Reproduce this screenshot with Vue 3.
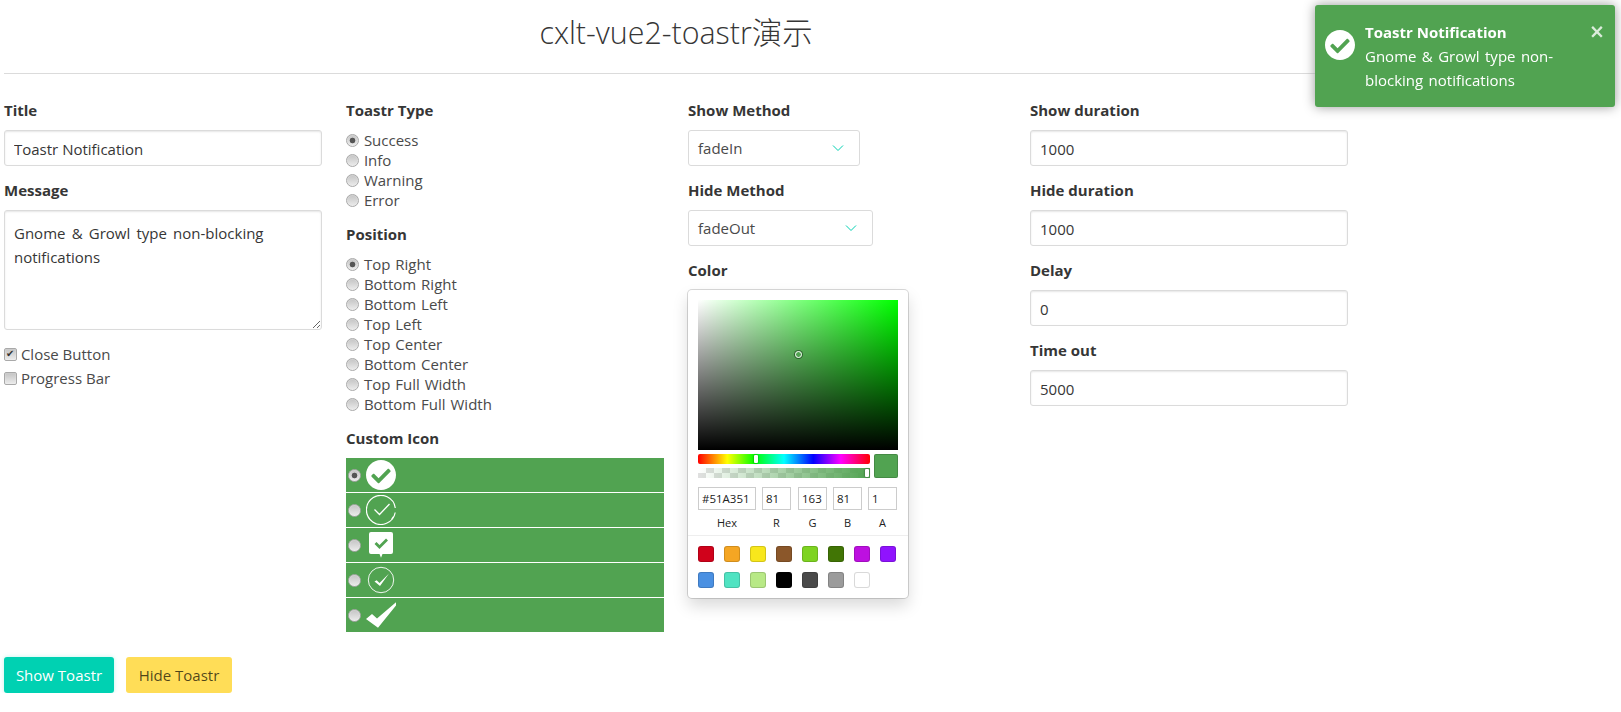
<script setup>
import { ref } from 'vue'

const title = ref('Toastr Notification')
const message = ref('Gnome & Growl type non-blocking notifications')
const closeButton = ref(true)
const progressBar = ref(false)
const toastType = ref('Success')
const position = ref('Top Right')
const customIcon = ref(0)
const showDuration = ref('1000')
const hideDuration = ref('1000')
const delay = ref('0')
const timeOut = ref('5000')

const types = ['Success', 'Info', 'Warning', 'Error']
const positions = [
  'Top Right',
  'Bottom Right',
  'Bottom Left',
  'Top Left',
  'Top Center',
  'Bottom Center',
  'Top Full Width',
  'Bottom Full Width',
]
const icons = [0, 1, 2, 3, 4]
const rgba = [
  { label: 'R', value: '81', cls: 'in-r' },
  { label: 'G', value: '163', cls: 'in-g' },
  { label: 'B', value: '81', cls: 'in-b' },
  { label: 'A', value: '1', cls: 'in-a' },
]
const presets = [
  '#D0021B', '#F5A623', '#F8E71C', '#8B572A', '#7ED321', '#417505', '#BD10E0', '#9013FE',
  '#4A90E2', '#50E3C2', '#B8E986', '#000000', '#4A4A4A', '#9B9B9B', '#FFFFFF',
]
const checkCircle = 'M504 256c0 136.967-111.033 248-248 248S8 392.967 8 256 119.033 8 256 8s248 111.033 248 248zM227.314 387.314l184-184c6.248-6.248 6.248-16.379 0-22.627l-22.627-22.627c-6.248-6.249-16.379-6.249-22.628 0L216 308.118l-70.059-70.059c-6.248-6.248-16.379-6.248-22.628 0l-22.627 22.627c-6.248 6.248-6.248 16.379 0 22.627l104 104c6.249 6.25 16.379 6.25 22.628.001z'
</script>

<template>
  <div class="page">
    <h1 class="heading">cxlt-vue2-toastr演示</h1>
    <hr class="rule">

    <div class="columns">
      <div class="col">
        <label class="label">Title</label>
        <input v-model="title" class="input" type="text">
        <label class="label">Message</label>
        <textarea v-model="message" class="input textarea" />
        <label class="check"><input v-model="closeButton" class="box" type="checkbox"> Close Button</label>
        <label class="check"><input v-model="progressBar" class="box" type="checkbox"> Progress Bar</label>
      </div>

      <div class="col">
        <label class="label">Toastr Type</label>
        <div class="radios">
          <label v-for="t in types" :key="t" class="radio">
            <input v-model="toastType" class="dot" type="radio" :value="t"> {{ t }}
          </label>
        </div>
        <label class="label">Position</label>
        <div class="radios">
          <label v-for="p in positions" :key="p" class="radio">
            <input v-model="position" class="dot" type="radio" :value="p"> {{ p }}
          </label>
        </div>
        <label class="label">Custom Icon</label>
        <div class="icon-list">
          <label v-for="i in icons" :key="i" class="icon-row">
            <input v-model="customIcon" class="dot" type="radio" :value="i">
            <svg v-if="i === 0" class="icon" viewBox="8 8 496 496">
              <path :d="checkCircle" fill="#fff" />
            </svg>
            <svg v-else-if="i === 1" class="icon" viewBox="0 0 30 30">
              <path d="M29.2 17.500A14.500 14.500 0 1 1 29.300 13" fill="none" stroke="#fff" stroke-width="1.200" />
              <path d="M27.500 21.500l-2 3" fill="none" stroke="#fff" stroke-width="1.200" />
              <path d="M8.500 14.500l5 5L23.500 9" fill="none" stroke="#fff" stroke-width="1.300" />
            </svg>
            <svg v-else-if="i === 2" class="icon" viewBox="0 0 30 30">
              <path d="M5 2h20a2 2 0 0 1 2 2v18a2 2 0 0 1-2 2h-8.500L15 27.700 13.500 24H5a2 2 0 0 1-2-2V4a2 2 0 0 1 2-2z" fill="#fff" />
              <path d="M9.500 13l4 4 7.500-7.500" fill="none" stroke="#51a351" stroke-width="2.800" />
            </svg>
            <svg v-else-if="i === 3" class="icon" viewBox="0 0 30 30">
              <circle cx="15" cy="15" r="12.700" fill="none" stroke="#fff" stroke-width="0.900" />
              <path d="M8.500 16.500l2.200-1.200 2.800 2.700L23 8.500 14 21z" fill="#fff" />
            </svg>
            <svg v-else class="icon" viewBox="0 0 30 30">
              <path d="M0 19l6-5 5 4.500L30 2.300v3.200L12 27.700z" fill="#fff" />
            </svg>
          </label>
        </div>
      </div>

      <div class="col">
        <label class="label">Show Method</label>
        <div class="select select-show">
          <span>fadeIn</span>
          <svg class="chevron" viewBox="0 0 12 8"><path d="M1 1.500l5 5 5-5" /></svg>
        </div>
        <label class="label">Hide Method</label>
        <div class="select select-hide">
          <span>fadeOut</span>
          <svg class="chevron" viewBox="0 0 12 8"><path d="M1 1.500l5 5 5-5" /></svg>
        </div>
        <label class="label">Color</label>
        <div class="picker">
          <div class="saturation">
            <div class="sat-dot" />
          </div>
          <div class="sliders">
            <div class="bars">
              <div class="hue"><div class="bar-handle hue-handle" /></div>
              <div class="alpha">
                <div class="alpha-fill" />
                <div class="bar-handle alpha-handle" />
              </div>
            </div>
            <div class="current" />
          </div>
          <div class="fields">
            <div class="field field-hex">
              <input class="mini" value="#51A351">
              <span>Hex</span>
            </div>
            <div v-for="f in rgba" :key="f.label" class="field" :class="f.cls">
              <input class="mini" :value="f.value">
              <span>{{ f.label }}</span>
            </div>
          </div>
          <div class="presets">
            <div v-for="c in presets" :key="c" class="preset" :style="{ background: c }" />
          </div>
        </div>
      </div>

      <div class="col">
        <label class="label">Show duration</label>
        <input v-model="showDuration" class="input" type="text">
        <label class="label">Hide duration</label>
        <input v-model="hideDuration" class="input" type="text">
        <label class="label">Delay</label>
        <input v-model="delay" class="input" type="text">
        <label class="label">Time out</label>
        <input v-model="timeOut" class="input" type="text">
      </div>
    </div>

    <div class="actions">
      <button class="btn btn-show">Show Toastr</button>
      <button class="btn btn-hide">Hide Toastr</button>
    </div>

    <!-- toast -->
    <div class="toast">
      <svg class="toast-icon" viewBox="8 8 496 496">
        <path :d="checkCircle" fill="#fff" />
      </svg>
      <div class="toast-body">
        <div class="toast-title">Toastr Notification</div>
        <div class="toast-msg">Gnome &amp; Growl type non-blocking notifications</div>
      </div>
      <span class="toast-close">×</span>
    </div>
  </div>
</template>

<style>
html, body {
  background: #fff;
}
</style>

<style scoped>
.page {
  width: 1344px;
  margin-left: 4px;
  color: #4a4a4a;
  font-family: "Open Sans", "Noto Sans CJK SC", sans-serif;
  font-size: 15px;
  line-height: 24px;
}

.heading {
  margin: 0;
  height: 73px;
  padding-top: 11px;
  box-sizing: border-box;
  text-align: center;
  font-size: 30.400px;
  line-height: 44px;
  font-weight: 300;
  color: #363636;
}

.rule {
  margin: 0 0 24px;
  border: 0;
  height: 1px;
  background: #dbdbdb;
}

.columns {
  display: grid;
  grid-template-columns: repeat(4, 318px);
  column-gap: 24px;
  height: 534px;
}

.label {
  display: block;
  font-weight: 700;
  color: #363636;
  margin-bottom: 8px;
}

.input {
  display: block;
  width: 100%;
  height: 36px;
  margin-bottom: 12px;
  padding: 1px 9px 0;
  box-sizing: border-box;
  border: 1px solid #dbdbdb;
  border-radius: 3px;
  box-shadow: inset 0 1px 2px rgba(10, 10, 10, 0.1);
  font: inherit;
  color: #363636;
  outline: none;
}

.textarea {
  height: 120px;
  margin-bottom: 13px;
  padding: 10px 9px;
  resize: vertical;
  word-spacing: 2.300px;
}

.check {
  display: block;
  margin-top: -1px;
  margin-bottom: 1px;
}

.dot,
.box {
  appearance: none;
  position: relative;
  width: 13px;
  height: 13px;
  box-sizing: border-box;
  border: 1px solid #a9a9a9;
  background: linear-gradient(#c4c4c4, #ececec);
  box-shadow: inset 0 0 1px #fff;
}

.dot {
  border-radius: 50%;
}

.box {
  margin: 0;
  border-radius: 2px;
  vertical-align: -1px;
}

.box:checked::before {
  content: "✔";
  position: absolute;
  left: 1px;
  top: -1px;
  font: 10px/12px "DejaVu Sans", sans-serif;
  color: #333;
}

.dot:checked {
  background: radial-gradient(circle, #555 0 2.500px, transparent 3.200px), linear-gradient(#c4c4c4, #ececec);
}

.radios {
  margin-bottom: 12px;
}

.radio {
  display: block;
  height: 20px;
  line-height: 20px;
  word-spacing: 1px;
}

.radio .dot {
  margin: 0 0 0 0;
  vertical-align: -1px;
}

.icon-list {
  display: flex;
  flex-direction: column;
  gap: 1.300px;
}

.icon-row {
  display: flex;
  align-items: center;
  height: 33.700px;
  background: #51a351;
}

.icon-row .dot {
  margin: 1px 0 0 2px;
  flex: none;
}

.icon {
  width: 30px;
  height: 30px;
  margin-left: 5px;
  flex: none;
}

.select {
  display: flex;
  align-items: center;
  justify-content: space-between;
  height: 36px;
  margin-bottom: 12px;
  padding: 0 9px;
  box-sizing: border-box;
  border: 1px solid #dbdbdb;
  border-radius: 3px;
  background: #fff;
}

.select-show {
  width: 172px;
  padding-right: 15px;
}

.select-hide {
  width: 185px;
  padding-right: 15px;
}

.chevron {
  width: 12px;
  height: 8px;
  fill: none;
  stroke: #00d1b2;
  stroke-width: 1;
}

.picker {
  position: relative;
  width: 220px;
  height: 308px;
  box-sizing: border-box;
  padding: 10px 10px 0;
  background: #fff;
  border-radius: 4px;
  box-shadow: 0 0 0 1px rgba(0, 0, 0, 0.15), 0 8px 16px rgba(0, 0, 0, 0.15);
  font-size: 11px;
  line-height: 14px;
}

.saturation {
  position: relative;
  height: 150px;
  background:
    linear-gradient(to top, #000, rgba(0, 0, 0, 0)),
    linear-gradient(to right, #fff, rgba(255, 255, 255, 0)),
    #0f0;
}

.sat-dot {
  position: absolute;
  left: 97px;
  top: 51px;
  width: 7px;
  height: 7px;
  box-sizing: border-box;
  border: 1.500px solid #fff;
  border-radius: 50%;
  box-shadow: 0 0 0 1px rgba(0, 0, 0, 0.4);
}

.sliders {
  display: flex;
  gap: 4px;
  margin-top: 4px;
}

.bars {
  width: 172px;
}

.hue {
  position: relative;
  height: 10px;
  border-radius: 2px;
  background: linear-gradient(to right, #f00 0%, #ff0 17%, #0f0 33%, #0ff 50%, #00f 67%, #f0f 83%, #f00 100%);
}

.alpha {
  position: relative;
  height: 10px;
  margin-top: 4px;
  background: repeating-conic-gradient(#e0e0e0 0 25%, #fff 0 50%) 0 0 / 16px 10px;
}

.alpha-fill {
  position: absolute;
  inset: 0;
  background: linear-gradient(to right, rgba(81, 163, 81, 0), #51a351);
}

.bar-handle {
  position: absolute;
  top: 1px;
  width: 4px;
  height: 8px;
  background: #fff;
  border-radius: 1px;
  box-shadow: 0 0 2px rgba(0, 0, 0, 0.6);
}

.hue-handle {
  left: 56px;
}

.alpha-handle {
  left: 167px;
}

.current {
  width: 24px;
  height: 24px;
  border-radius: 2px;
  background: #51a351;
  box-shadow: inset 0 0 0 1px rgba(0, 0, 0, 0.15);
}

.fields {
  display: flex;
  margin-top: 9px;
  height: 48px;
  color: #222;
  text-align: center;
}

.field {
  display: flex;
  flex-direction: column;
  flex: none;
}

.field span {
  margin-top: 6px;
}

.field-hex {
  width: 58px;
  margin-right: 6px;
}

.in-r {
  width: 29px;
  margin-right: 7px;
}

.in-g {
  width: 29px;
  margin-right: 6px;
}

.in-b {
  width: 29px;
  margin-right: 6px;
}

.in-a {
  width: 29px;
}

.mini {
  width: 100%;
  height: 23px;
  padding: 0 0 0 4px;
  box-sizing: border-box;
  border: 0;
  box-shadow: inset 0 0 0 1px #ccc;
  font: inherit;
  font-size: 11.500px;
  color: #222;
  outline: none;
}

.presets {
  display: flex;
  flex-wrap: wrap;
  gap: 10px;
  margin: 0 -10px;
  padding: 10px 10px 0;
  border-top: 1px solid #eee;
}

.preset {
  width: 16px;
  height: 16px;
  border-radius: 3px;
  box-shadow: inset 0 0 0 1px rgba(0, 0, 0, 0.15);
}

.actions {
  display: flex;
  gap: 12px;
  margin-top: 25px;
}

.btn {
  height: 36px;
  padding: 0;
  border: 0;
  border-radius: 3px;
  font: inherit;
  white-space: nowrap;
  cursor: pointer;
}

.btn-show {
  width: 110px;
  background: #00d1b2;
  color: #fff;
  box-shadow: 0 0 4px rgba(0, 209, 178, 0.25);
}

.btn-hide {
  width: 106px;
  background: #ffdd57;
  color: rgba(0, 0, 0, 0.7);
}

.toast {
  position: fixed;
  top: 5px;
  right: 6px;
  display: flex;
  box-sizing: border-box;
  width: 300px;
  height: 102px;
  padding: 15px 10px 0;
  background: #51a351;
  border-radius: 3px;
  box-shadow: 0 0 12px #999;
  color: #fff;
}

.toast-icon {
  width: 30px;
  height: 30px;
  margin-top: 10px;
  flex: none;
}

.toast-body {
  width: 210px;
  margin-left: 10px;
  word-spacing: 1.500px;
}

.toast-title {
  font-weight: 700;
  word-spacing: 0;
}

.toast-close {
  position: absolute;
  top: 14px;
  right: 10px;
  font-family: "DejaVu Sans", sans-serif;
  font-size: 19px;
  font-weight: 700;
  line-height: 24px;
  opacity: 0.8;
}
</style>
